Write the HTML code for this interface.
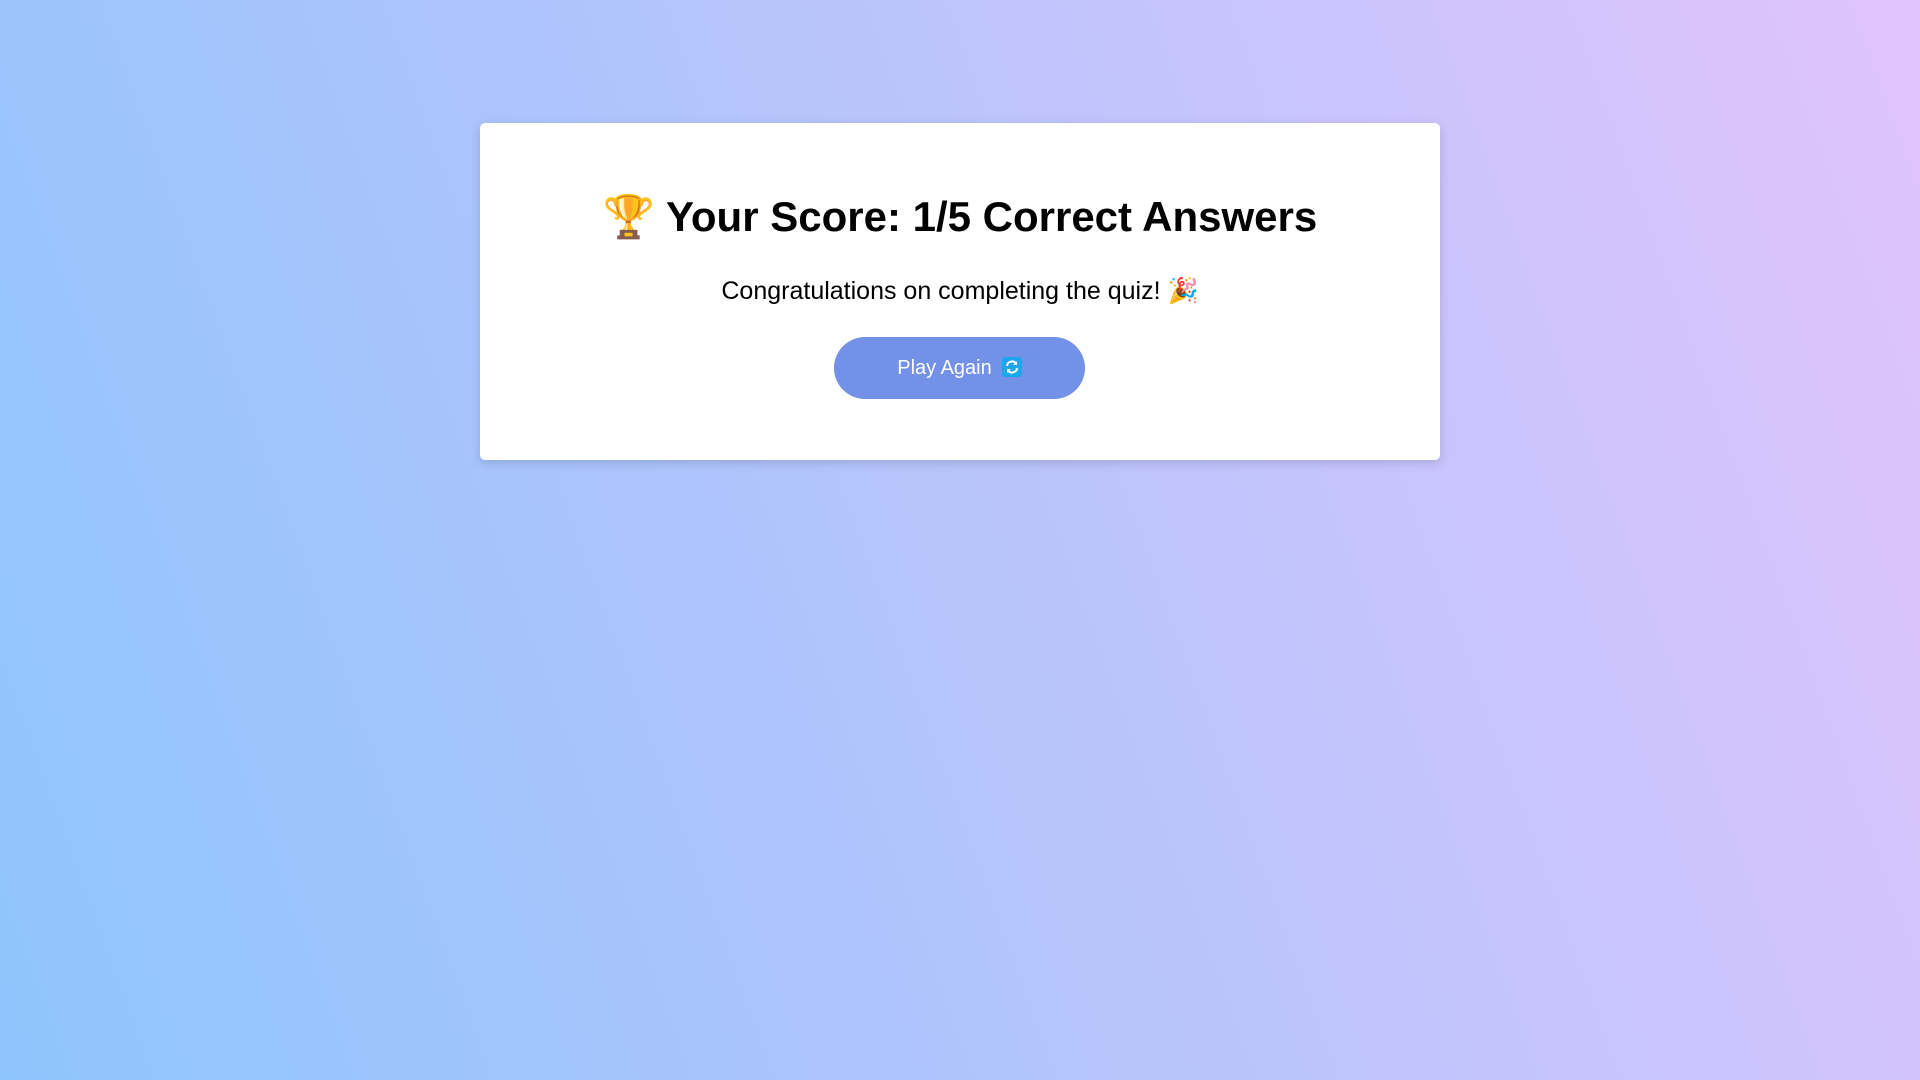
<!DOCTYPE html>
<html><head><meta charset="utf-8"><style>
html,body{margin:0;height:100%}
body{width:1920px;height:1080px;background:linear-gradient(70deg,#8ec5fc,#e0c3fc);font-family:"Liberation Sans",Arial,sans-serif;position:relative;overflow:hidden}
.card{position:absolute;left:480px;top:123px;width:960px;height:337px;background:#fff;border-radius:5px;box-shadow:0 3px 10px rgba(0,0,0,.15);text-align:center}
h1{margin:0;position:absolute;left:0;right:0;top:65px;font-size:42px;font-weight:bold;line-height:58px;color:#000}
p{margin:0;position:absolute;left:0;right:0;top:152px;font-size:25px;line-height:32px;color:#000}
.btn{position:absolute;left:354px;top:214px;width:251px;height:62px;border-radius:31px;background:#7391e6;color:#fff;font-size:20px;line-height:62px}
.ic{display:inline-block;width:20px;height:20px;background:#1aa7ec;border-radius:3px;vertical-align:-3px;margin-left:10px;position:relative}
.ic svg{display:block;position:absolute;left:0;top:0}
</style></head><body>
<div class="card">
<h1>🏆 Your Score: 1/5 Correct Answers</h1>
<p>Congratulations on completing the quiz! 🎉</p>
<div class="btn">Play Again<span class="ic"><svg width="20" height="20" viewBox="0 0 20 20"><path d="M5 9a5 5 0 0 1 9-2.5" stroke="#fff" stroke-width="2" fill="none"/><path d="M15 4v4h-4z" fill="#fff"/><path d="M15 11a5 5 0 0 1-9 2.5" stroke="#fff" stroke-width="2" fill="none"/><path d="M5 16v-4h4z" fill="#fff"/></svg></span></div>
</div>
</body></html>
